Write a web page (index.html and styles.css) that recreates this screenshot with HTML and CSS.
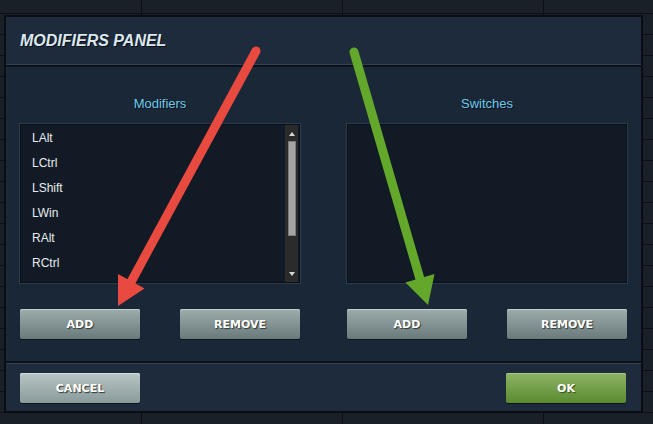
FILE: index.html
```html
<!DOCTYPE html>
<html lang="en">
<head>
    <meta charset="UTF-8">
    <meta name="viewport" content="width=device-width, initial-scale=1.0">
    <title>Modifiers Panel</title>
    <link rel="stylesheet" href="styles.css">
</head>
<body>
    <div class="dialog">
        <div class="dialog-header">
            <h1>MODIFIERS PANEL</h1>
        </div>
        <div class="dialog-body">
            <div class="column">
                <div class="list-title">Modifiers</div>
                <div class="listbox">
                    <ul class="items">
                        <li>LAlt</li>
                        <li>LCtrl</li>
                        <li>LShift</li>
                        <li>LWin</li>
                        <li>RAlt</li>
                        <li>RCtrl</li>
                    </ul>
                    <div class="scrollbar">
                        <span class="arrow-up"></span>
                        <span class="thumb"></span>
                        <span class="arrow-down"></span>
                    </div>
                </div>
                <div class="button-row">
                    <button class="btn">ADD</button>
                    <button class="btn">REMOVE</button>
                </div>
            </div>
            <div class="column">
                <div class="list-title">Switches</div>
                <div class="listbox"></div>
                <div class="button-row">
                    <button class="btn">ADD</button>
                    <button class="btn">REMOVE</button>
                </div>
            </div>
        </div>
        <div class="dialog-footer">
            <button class="btn btn-cancel">CANCEL</button>
            <button class="btn btn-ok">OK</button>
        </div>
    </div>

    <!-- annotation arrows drawn over the dialog -->
    <svg class="annotations" width="653" height="424" viewBox="0 0 653 424">
        <line x1="256" y1="51" x2="131" y2="282" stroke="#e84a40" stroke-width="9" stroke-linecap="round"/>
        <polygon points="118,306 144.5,288.5 118,274" fill="#e84a40"/>
        <line x1="354" y1="52" x2="420" y2="279" stroke="#63a82b" stroke-width="9" stroke-linecap="round"/>
        <polygon points="428,305 434.5,274 405.5,282.5" fill="#63a82b"/>
    </svg>
</body>
</html>
```

FILE: styles.css
```css
* {
    margin: 0;
    padding: 0;
    box-sizing: border-box;
    font-family: "Liberation Sans", Arial, sans-serif;
}
body {
    width: 653px;
    height: 424px;
    overflow: hidden;
    position: relative;
    background-color: #1a2028;
    background-image:
        linear-gradient(to bottom, #0c1015 1px, transparent 1px),
        linear-gradient(to right, #0c1015 1px, transparent 1px);
    background-size: 100% 21px, 201px 100%;
    background-position: 0 13px, 141px 0;
}
.dialog {
    margin: 15px 0 0 4px;
    width: 639px;
    height: 398px;
    border: 2px solid #0a0e13;
    display: flex;
    flex-direction: column;
    box-shadow: inset 0 0 0 1px rgba(70, 92, 115, 0.45);
}
.dialog-header {
    height: 50px;
    background: #1e2b3d;
    border-bottom: 2px solid #0b1017;
    box-shadow: inset 0 -1px 0 #2f4156;
    padding-left: 14px;
}
.dialog-header h1 {
    font-size: 16px;
    font-weight: bold;
    font-style: italic;
    line-height: 48px;
    color: #dde8ee;
    text-shadow: 1px 1px 0 #0a0e14;
}
.dialog-body {
    height: 294px;
    background: rgba(27, 40, 57, 0.93);
    display: flex;
    gap: 47px;
    padding: 29px 14px 0;
}
.column {
    width: 280px;
    display: flex;
    flex-direction: column;
}
.list-title {
    text-align: center;
    font-size: 13px;
    line-height: 16px;
    color: #6fcaea;
    text-shadow: 1px 1px 0 #0c1118;
    margin-bottom: 12px;
}
.listbox {
    height: 159px;
    background: #111a25;
    border: 1px solid #0a1017;
    box-shadow: 0 0 0 1px #2b3b4d;
    display: flex;
}
.items {
    flex: 1;
    list-style: none;
    padding: 1px 0 0 11px;
}
.items li {
    font-size: 12px;
    line-height: 25px;
    height: 25px;
    color: #e8ecef;
}
.scrollbar {
    width: 13px;
    margin-right: 1px;
    background: #2b2b2b;
    display: flex;
    flex-direction: column;
    align-items: center;
    padding: 7px 0 6px;
}
.arrow-up, .arrow-down {
    width: 0;
    height: 0;
    border-left: 3px solid transparent;
    border-right: 3px solid transparent;
}
.arrow-up {
    border-bottom: 4px solid #d8d8d8;
}
.arrow-down {
    border-top: 4px solid #d8d8d8;
    margin-top: auto;
}
.thumb {
    width: 8px;
    height: 95px;
    margin-top: 5px;
    background: #a4a4a4;
    border: 1px solid #7c7c7c;
}
.button-row {
    display: flex;
    justify-content: space-between;
    margin-top: 26px;
}
.btn {
    width: 120px;
    height: 30px;
    border: none;
    border-radius: 2px;
    font-family: "DejaVu Sans", Verdana, sans-serif;
    font-size: 11px;
    font-weight: bold;
    color: #ffffff;
    text-shadow: 1px 1px 1px #2e3638;
    background: linear-gradient(to bottom, #9dadac, #6a7a7b);
    box-shadow: inset 0 1px 0 #c4d0cf, 0 1px 0 #0d131a;
    cursor: pointer;
}
.btn:hover {
    background: linear-gradient(to bottom, #a9b9b8, #758586);
}
.dialog-footer {
    height: 50px;
    background: #1e2b3d;
    border-top: 2px solid #0b1017;
    box-shadow: inset 0 1px 0 #2f4156;
    display: flex;
    justify-content: space-between;
    padding: 10px 15px 0 14px;
}
.btn-cancel {
    background: linear-gradient(to bottom, #b8c7c5, #8a9a9a);
    box-shadow: inset 0 1px 0 #d4dedc, 0 1px 0 #0d131a;
}
.btn-ok {
    background: linear-gradient(to bottom, #8eb465, #5a8a30);
    box-shadow: inset 0 1px 0 #a9cc83, 0 1px 0 #0d131a;
    text-shadow: 1px 1px 1px #33501b;
}
.annotations {
    position: absolute;
    left: 0;
    top: 0;
    pointer-events: none;
}
```
